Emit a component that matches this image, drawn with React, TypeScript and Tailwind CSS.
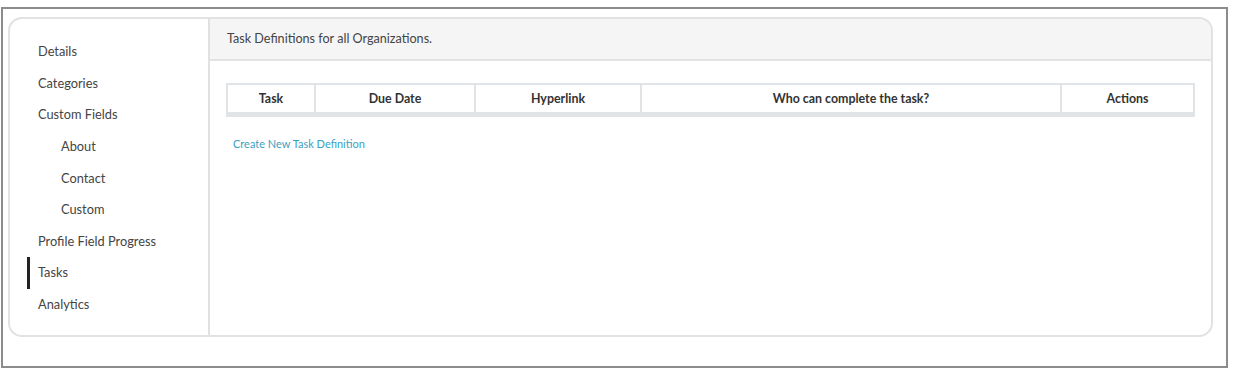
import React from 'react';

const navItems = [
  { label: 'Details', sub: false },
  { label: 'Categories', sub: false },
  { label: 'Custom Fields', sub: false },
  { label: 'About', sub: true },
  { label: 'Contact', sub: true },
  { label: 'Custom', sub: true },
  { label: 'Profile Field Progress', sub: false },
  { label: 'Tasks', sub: false, active: true },
  { label: 'Analytics', sub: false },
];

const columns = ['Task', 'Due Date', 'Hyperlink', 'Who can complete the task?', 'Actions'];

export default function App() {
  return (
    <div className="w-[1240px] h-[374px] bg-white pt-[7px] pl-px font-['Lato','Open_Sans',sans-serif]">
      <div className="w-[1227px] h-[361px] border-2 border-[#8c8c8c] pl-[5px] pt-[8px]">
        <div className="w-[1205px] h-[320px] border-2 border-[#e2e2e2] rounded-[14px] flex overflow-hidden">
          {/* Sidebar */}
          <div className="w-[200px] shrink-0 border-r-2 border-[#dfe2e5] pt-[17px]">
            {navItems.map((item) => (
              <div key={item.label} className="relative h-[31.6px] flex items-center">
                {item.active && <div className="absolute left-[17px] top-0 w-[3px] h-full bg-[#222]" />}
                <span className={`text-[12.8px] text-[#444] ${item.sub ? 'pl-[51px]' : 'pl-[28px]'}`}>{item.label}</span>
              </div>
            ))}
          </div>

          {/* Main */}
          <div className="flex-1">
            <div className="h-[42px] bg-[#f5f5f5] border-b-2 border-[#e3e3e3] flex items-center pl-[17px] text-[12.6px] text-[#444]">
              Task Definitions for all Organizations.
            </div>
            <div className="pl-[16px] pt-[22px]">
              <div className="w-[969px] grid grid-cols-[86px_158px_164px_418px_131px] border-2 border-b-[5px] border-[#e1e4e7] bg-[#e1e4e7] gap-x-[2px]">
                {columns.map((c) => (
                  <div key={c} className="h-[27px] pt-[2px] bg-white flex items-center justify-center text-[12.4px] font-bold text-[#333]">
                    {c}
                  </div>
                ))}
              </div>
              <div className="pt-[19px] pl-[7px] text-[11px] text-[#3a9fc4]">Create New Task Definition</div>
            </div>
          </div>
        </div>
      </div>
    </div>
  );
}
